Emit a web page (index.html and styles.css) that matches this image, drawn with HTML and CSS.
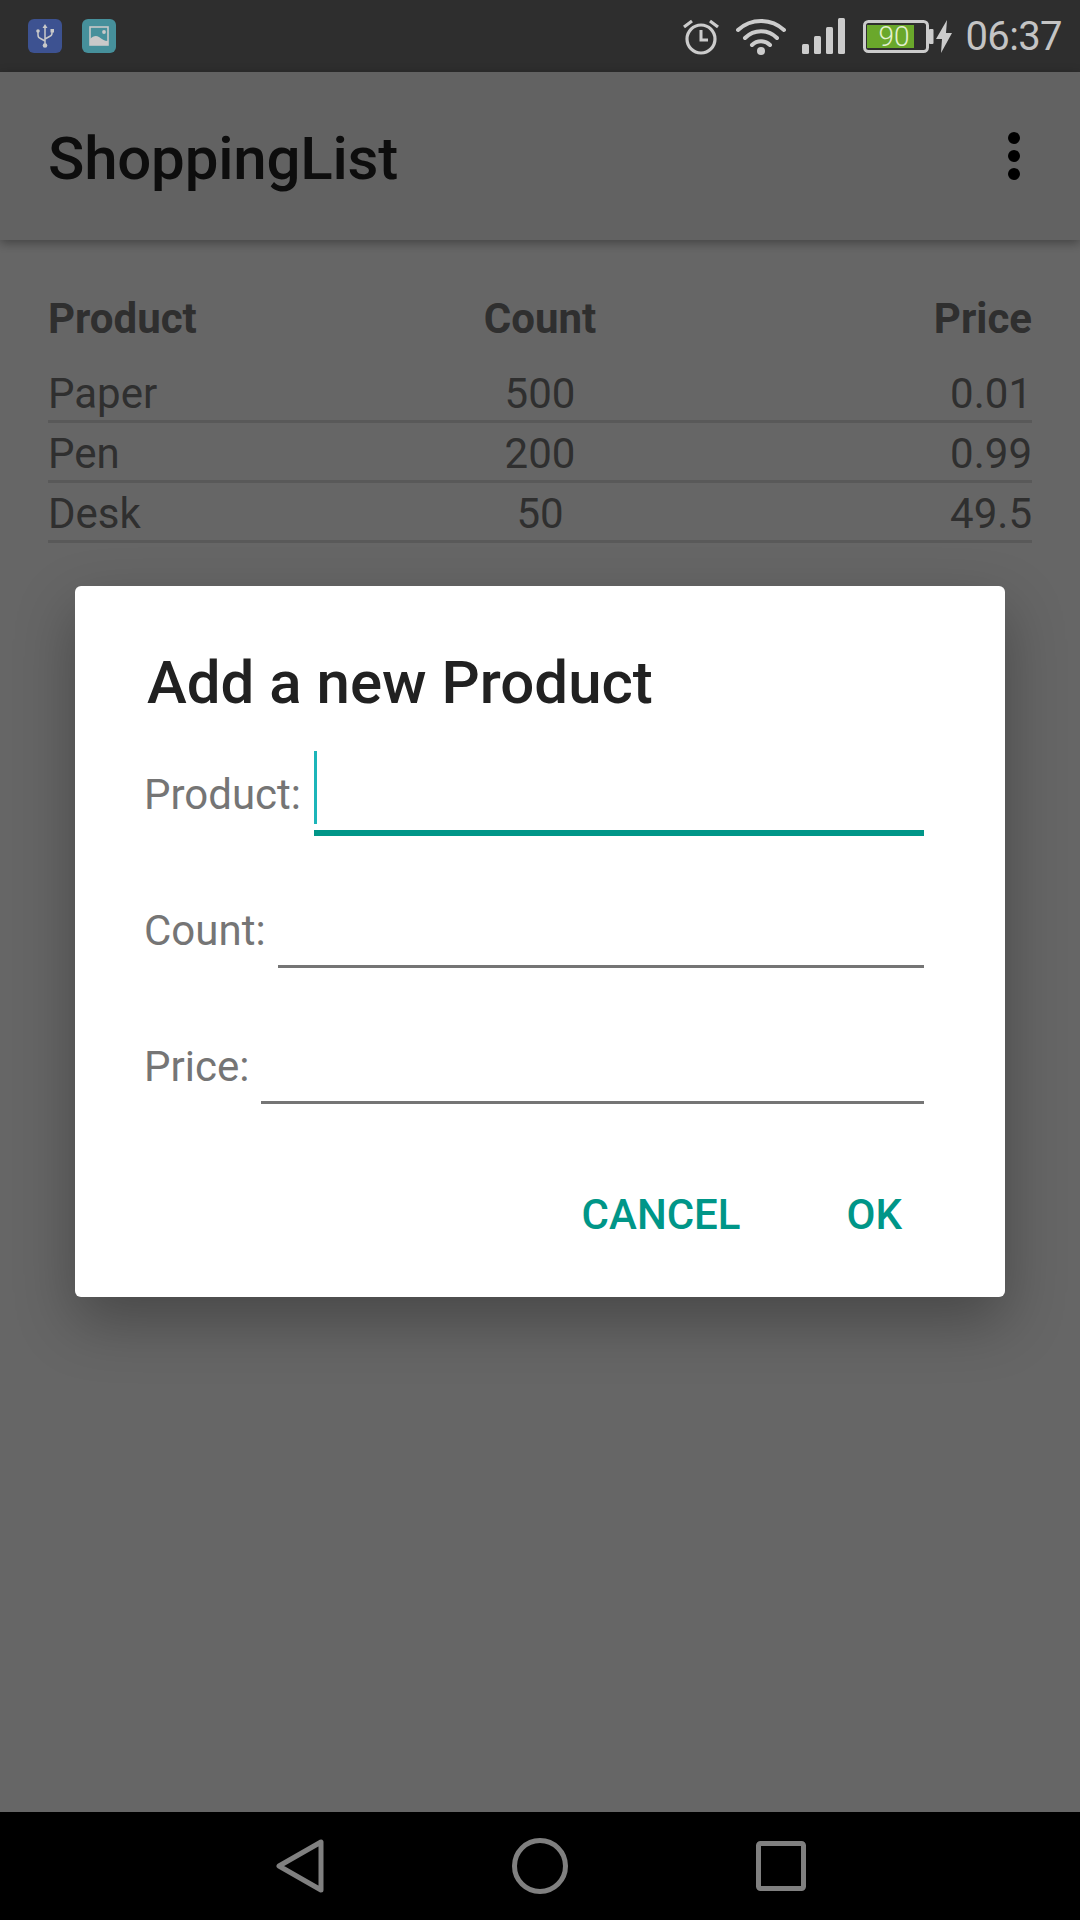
FILE: index.html
```html
<!DOCTYPE html>
<html>
	<head>
		<meta charset="utf-8">
		<title>ShoppingList</title>
		<link rel="stylesheet" href="styles.css">
	</head>
	<body>
		<div id="screen">
			<div class="status">
				<div class="status-left">
					<svg class="note" width="34" height="34" viewBox="0 0 34 34">
						<rect width="34" height="34" rx="6" fill="#3d5291"/>
						<path d="M17 7v18M10 13v3c0 2 1 3 2.500 3.500L17 22M24 12v2c0 2-1 3-2.500 3.500L17 20" fill="none" stroke="#c9c9c9" stroke-width="1.500"/>
						<path d="M17 5l2.500 4h-5z" fill="#c9c9c9"/>
						<circle cx="10" cy="12" r="1.800" fill="#c9c9c9"/>
						<rect x="22.500" y="10" width="3.500" height="3.500" fill="#c9c9c9"/>
						<circle cx="17" cy="26.500" r="2.300" fill="#c9c9c9"/>
					</svg>
					<svg class="note" width="34" height="34" viewBox="0 0 34 34">
						<rect width="34" height="34" rx="6" fill="#46909b"/>
						<rect x="8" y="8" width="18" height="18" fill="none" stroke="#c9c9c9" stroke-width="1.600"/>
						<path d="M8 25v-5c3-3 6-4 9-2s5 4 9 4v4H8z" fill="#c9c9c9"/>
						<circle cx="22" cy="13" r="1.900" fill="#c9c9c9"/>
					</svg>
				</div>
				<div class="status-right">
					<svg class="alarm" width="36" height="37" viewBox="0 0 36 37" fill="none" stroke="#ccc">
						<circle cx="18" cy="21" r="14" stroke-width="3.200"/>
						<path d="M18 12v10h7" stroke-width="3"/>
						<path d="M1 9l8-6M35 9l-8-6" stroke-width="3.200"/>
					</svg>
					<svg class="wifi" width="50" height="37" viewBox="0 0 50 37" fill="none" stroke="#ccc" stroke-width="4" stroke-linecap="round">
						<path d="M2 12C15 0 35 0 48 12"/>
						<path d="M9 20C18 11 32 11 41 20"/>
						<path d="M16 27C21 22 29 22 34 27"/>
						<circle cx="25" cy="33" r="4" fill="#ccc" stroke="none"/>
					</svg>
					<svg class="signal" width="43" height="36" viewBox="0 0 43 36" fill="#ccc">
						<rect x="0" y="26" width="7" height="10" rx="1.500"/>
						<rect x="12" y="18" width="7" height="18" rx="1.500"/>
						<rect x="24" y="9" width="7" height="27" rx="1.500"/>
						<rect x="36" y="0" width="7" height="36" rx="1.500"/>
					</svg>
					<svg class="battery" width="71" height="33" viewBox="0 0 71 33">
						<rect x="1.500" y="1.500" width="63" height="30" rx="4" fill="none" stroke="#ccc" stroke-width="3"/>
						<rect x="4" y="5" width="47" height="23" fill="#6aa82b"/>
						<rect x="66" y="9" width="4.500" height="15" rx="1" fill="#ccc"/>
						<text x="31" y="26" text-anchor="middle" class="battery-num">90</text>
					</svg>
					<svg class="bolt" width="16" height="33" viewBox="0 0 16 33">
						<path d="M11 0L0 19h6L5 33 16 13h-6z" fill="#ccc"/>
					</svg>
					<span class="clock">06:37</span>
				</div>
			</div>

			<div class="page">
				<div class="appbar">
					<span class="app-title">ShoppingList</span>
					<svg class="more" width="14" height="50" viewBox="0 0 14 50" fill="#000">
						<circle cx="7" cy="7" r="6"/>
						<circle cx="7" cy="25" r="6"/>
						<circle cx="7" cy="43" r="6"/>
					</svg>
				</div>
				<div class="list">
					<div class="row head">
						<span>Product</span><span>Count</span><span>Price</span>
					</div>
					<div class="row">
						<span>Paper</span><span>500</span><span>0.01</span>
					</div>
					<div class="row">
						<span>Pen</span><span>200</span><span>0.99</span>
					</div>
					<div class="row">
						<span>Desk</span><span>50</span><span>49.5</span>
					</div>
				</div>

				<div class="scrim">
					<div class="dialog">
						<h1 class="dialog-title">Add a new Product</h1>
						<div class="field">
							<label>Product:</label>
							<div class="input active"><i class="caret"></i></div>
						</div>
						<div class="field">
							<label>Count:</label>
							<div class="input"></div>
						</div>
						<div class="field">
							<label>Price:</label>
							<div class="input"></div>
						</div>
						<div class="actions">
							<span class="btn">CANCEL</span>
							<span class="btn">OK</span>
						</div>
					</div>
				</div>
			</div>

			<div class="navbar">
				<svg width="48" height="54" viewBox="0 0 48 54" fill="none" stroke="#808080" stroke-width="5" stroke-linejoin="round">
					<path d="M45 3v48L3 27z"/>
				</svg>
				<svg width="56" height="56" viewBox="0 0 56 56" fill="none" stroke="#808080" stroke-width="5">
					<circle cx="28" cy="28" r="25.500"/>
				</svg>
				<svg width="50" height="50" viewBox="0 0 50 50" fill="none" stroke="#808080" stroke-width="5" stroke-linejoin="round">
					<rect x="2.500" y="2.500" width="45" height="45" rx="2"/>
				</svg>
			</div>
		</div>
	</body>
</html>
```

FILE: styles.css
```css
*{
	margin: 0;padding: 0;
	box-sizing: border-box;
}
body{
	font-family: Roboto, "Liberation Sans", sans-serif;
	background: #000;
}
#screen{
	width: 1080px;
	height: 1920px;
	display: flex;
	flex-direction: column;
	overflow: hidden;
}
.status{
	height: 72px;
	background: #2e2e2e;
	display: flex;
	justify-content: space-between;
	align-items: center;
	padding: 0 18px 0 28px;
}
.status-left{
	display: flex;
	gap: 20px;
}
.status-right{
	display: flex;
	align-items: center;
}
.alarm{
	margin-right: 17px;
}
.wifi{
	margin-right: 16px;
}
.signal{
	margin-right: 18px;
}
.bolt{
	margin-left: 2px;
}
.battery-num{
	font-family: Roboto, sans-serif;
	font-size: 28px;
	font-weight: 300;
	fill: #e3f0d0;
}
.clock{
	margin-left: 13px;
	font-size: 40px;
	letter-spacing: -0.6px;
	color: #c4c4c4;
}
.page{
	position: relative;
	flex: 1;
	background: #fff;
}
.appbar{
	height: 168px;
	background: #f5f5f5;
	box-shadow: 0 3px 10px rgba(0,0,0,0.35);
	display: flex;
	justify-content: space-between;
	align-items: center;
	padding: 0 59px 0 48px;
}
.app-title{
	padding-top: 4px;
	font-size: 60px;
	font-weight: 500;
	letter-spacing: -0.2px;
	color: #212121;
}
.list{
	padding: 34px 48px 0;
}
.row{
	display: grid;
	grid-template-columns: 1fr 1fr 1fr;
	height: 60px;
	padding-top: 4px;
	align-items: center;
	border-bottom: 3px solid #dfdfdf;
	font-size: 42px;
	color: #757575;
}
.row span:nth-child(2){
	text-align: center;
}
.row span:nth-child(3){
	text-align: right;
}
.row.head{
	height: 89px;
	padding-top: 0;
	border-bottom: 0;
	font-weight: 700;
}
.scrim{
	position: absolute;
	left: 0;
	top: 0;
	right: 0;
	bottom: 0;
	background: rgba(0,0,0,0.6);
	display: flex;
	align-items: center;
	justify-content: center;
}
.dialog{
	width: 930px;
	height: 711px;
	margin-bottom: 1px;
	background: #fff;
	border-radius: 6px;
	box-shadow: 0 24px 60px rgba(0,0,0,0.3);
	padding: 60px 81px 0 69px;
}
.dialog-title{
	font-size: 60px;
	font-weight: 500;
	line-height: 70px;
	color: #212121;
	margin-left: 3px;
	padding-top: 2px;
	height: 72px;
	margin-bottom: 24px;
}
.field{
	display: flex;
	align-items: flex-start;
	height: 136px;
}
.field label{
	font-size: 42px;
	color: #757575;
	margin-right: 12px;
	padding-top: 28px;
}
.input{
	position: relative;
	flex: 1;
	height: 90px;
	border-bottom: 3px solid #757575;
}
.input.active{
	height: 94px;
	margin-left: 1px;
	border-bottom: 6px solid #009688;
}
.caret{
	position: absolute;
	left: 0;
	top: 9px;
	width: 3px;
	height: 73px;
	background: #1cb5b9;
}
.actions{
	display: flex;
	justify-content: flex-end;
	gap: 106px;
	padding-right: 22px;
	margin-top: 40px;
}
.btn{
	font-size: 42px;
	font-weight: 500;
	color: #009688;
}
.navbar{
	height: 108px;
	background: #000;
	display: flex;
	align-items: center;
	padding-left: 276px;
	gap: 188px;
}
```
